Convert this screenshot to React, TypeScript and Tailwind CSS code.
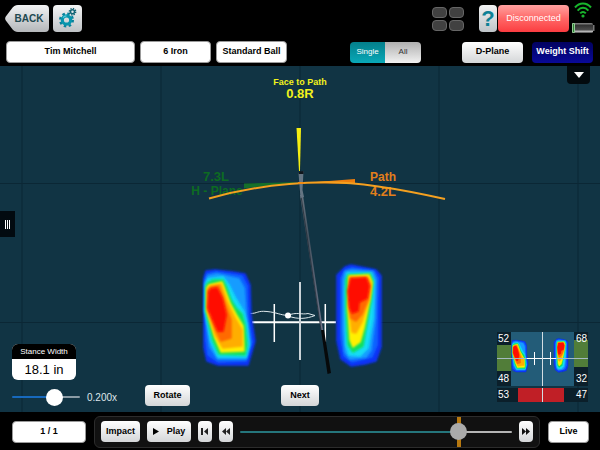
import { useState } from 'react';
import type { ButtonHTMLAttributes } from 'react';
import clsx from 'clsx';

type ButtonProps = ButtonHTMLAttributes<HTMLButtonElement>;

// Light glossy button used all over the app
function SilverButton({ className, ...props }: ButtonProps) {
  return (
    <button
      type="button"
      className={clsx(
        'flex h-[21px] shrink-0 items-center justify-center rounded bg-gradient-to-b from-white to-[#d4d6d8] text-[9px] font-bold text-black',
        className
      )}
      {...props}
    />
  );
}

// White field with a grey rim (player, club, ball, counter)
function FieldButton({ className, ...props }: ButtonProps) {
  return (
    <button
      type="button"
      className={clsx(
        'flex h-[22px] shrink-0 items-center justify-center rounded border border-[#9a9a9a] bg-white text-[9px] font-bold text-black',
        className
      )}
      {...props}
    />
  );
}

function GearsIcon() {
  return (
    <svg viewBox="0 0 29 27" className="h-[27px] w-[29px]" fill="none" aria-hidden="true">
      <circle cx="13.5" cy="15" r="6.3" stroke="#08809a" strokeWidth="2.4" strokeDasharray="2.5 2.45" />
      <circle cx="13.5" cy="15" r="4.2" stroke="#0795ad" strokeWidth="3.2" />
      <path d="M10 12.6a4.3 4.3 0 0 1 3.5-1.8" stroke="#56cbdb" strokeWidth="1.2" />
      <circle cx="19.5" cy="6.7" r="3.2" stroke="#126475" strokeWidth="1.4" strokeDasharray="1.3 1.21" />
      <circle cx="19.5" cy="6.7" r="2" stroke="#126475" strokeWidth="1.5" />
    </svg>
  );
}

function WifiIcon() {
  return (
    <svg viewBox="0 0 18 16" className="h-4 w-[18px]" fill="none" stroke="#18b52c" strokeWidth="2" aria-hidden="true">
      <path d="M1 5.5C5.5 0 12.5 0 17 5.5" />
      <path d="M3.6 8.6C6.8 4.8 11.2 4.8 14.4 8.6" />
      <path d="M6.2 11.4C7.9 9.4 10.1 9.4 11.8 11.4" />
      <circle cx="9" cy="14" r="1.6" fill="#18b52c" stroke="none" />
    </svg>
  );
}

function BatteryIcon() {
  return (
    <svg viewBox="0 0 24 12" className="h-3 w-6" aria-hidden="true">
      <defs>
        <linearGradient id="battery" x1="0" y1="0" x2="0" y2="1">
          <stop offset="0" stopColor="#8a8a8a" />
          <stop offset="0.25" stopColor="#333" />
          <stop offset="0.65" stopColor="#4a4a4a" />
          <stop offset="0.85" stopColor="#b5b5b5" />
          <stop offset="1" stopColor="#444" />
        </linearGradient>
      </defs>
      <rect x="1" y="1" width="21" height="10" rx="1.5" fill="url(#battery)" />
      <rect x="22" y="3" width="1.5" height="6" fill="#777" />
      <rect x="1" y="1" width="3" height="10" rx="1" fill="#8fca92" />
      <rect x="2" y="2" width="1" height="8" fill="#2e7d32" />
    </svg>
  );
}

// Pressure maps of the feet, coldest layer first
const leftFoot = [
  { color: '#0a32f5', d: 'M206 271 215 270 233 272 245 274 250 285 251 315 255 341 248 365 218 365 207 361 204 348 204 278Z' },
  { color: '#0f62ff', d: 'M207 274 216 272 242 276 247 286 248 315 252 342 246 361 218 362 208 355 206 340 205 280Z' },
  { color: '#169cff', d: 'M208 276 217 274 239 279 244 288 246 315 250 343 246 359 218 359 210 347 205 310 205 284Z' },
  { color: '#12dcf5', d: 'M208 279 223 277 229 285 236 299 244 312 247 325 249 345 246 357 218 357 211 342 205 310 206 284Z' },
  { color: '#10e060', d: 'M208 283 213 280 223 280 226 286 231 300 236 308 242 314 245 325 247 345 245 355 219 354 213 341 206 311 206 286Z' },
  { color: '#fff000', d: 'M209 285 222 282 225 290 230 303 237 316 243 326 244 351 221 352 215 338 207 311 207 288Z' },
  { color: '#ffae00', d: 'M210 286 221 284 227 301 235 318 242 330 242 346 223 348 215 335 208 311 208 289Z' },
  { color: '#ff6a00', d: 'M211 287 219 286 225 303 231 320 231 338 221 341 216 331 208 310 208 290Z' },
  { color: '#ff0800', d: 'M211 289 217 288 222 298 226 315 223 331 218 331 214 322 208 308 209 292Z' },
];

const rightFoot = [
  { color: '#0a32f5', d: 'M345 267 351 265 376 270 381 276 381 347 376 361 365 364 351 366 341 359 337 341 337 275Z' },
  { color: '#0f62ff', d: 'M345 270 352 268 374 271 378 278 377 345 372 357 352 362 344 356 341 338 341 278Z' },
  { color: '#169cff', d: 'M345 272 352 270 373 272 376 280 375 320 371 350 366 357 350 359 345 352 343 330 343 280Z' },
  { color: '#12dcf5', d: 'M347 273 371 273 374 281 373 318 368 348 360 356 349 355 346 345 345 291Z' },
  { color: '#10e060', d: 'M348 275 370 274 373 281 371 301 366 328 363 346 353 352 348 345 346 308 346 280Z' },
  { color: '#fff000', d: 'M349 276 369 275 372 282 370 298 364 328 360 342 353 347 350 340 348 308Z' },
  { color: '#ffae00', d: 'M350 277 368 277 371 284 369 299 362 322 356 333 352 332 349 308Z' },
  { color: '#ff6a00', d: 'M350 278 367 278 370 286 368 300 362 314 356 321 351 318 349 305Z' },
  { color: '#ff0800', d: 'M351 279 366 278 369 286 367 298 359 302 358 311 352 313 350 308 348 291Z' },
];

function Feet() {
  return (
    <g strokeLinejoin="round" strokeWidth="1.5">
      {[...leftFoot, ...rightFoot].map((layer) => (
        <path key={layer.d} d={layer.d} fill={layer.color} stroke={layer.color} filter="url(#soft)" />
      ))}
    </g>
  );
}

function SwingScene() {
  return (
    <svg
      viewBox="0 66 600 346"
      preserveAspectRatio="xMidYMid slice"
      className="absolute inset-0 size-full"
      role="img"
      aria-label="Swing path and foot pressure"
    >
      <defs>
        <filter id="soft" x="-20%" y="-20%" width="140%" height="140%">
          <feGaussianBlur stdDeviation="1.2" />
        </filter>
        <linearGradient id="shaft" x1="0" y1="0" x2="0" y2="1">
          <stop offset="0" stopColor="#65717c" />
          <stop offset="0.3" stopColor="#45525f" />
          <stop offset="1" stopColor="#6f7489" />
        </linearGradient>
      </defs>

      {/* floor grid */}
      <path d="M22 66V412M161 66V412M300 66V412M439 66V412M578 66V412M0 183.5H600M0 322.5H600" stroke="#0b2735" strokeWidth="1" />

      <g fontFamily="Liberation Sans, Arial, sans-serif" fontWeight="700" textAnchor="middle">
        <text x="300" y="85" fontSize="9" fill="#f2f21c">Face to Path</text>
        <text x="300" y="98" fontSize="13" fill="#f2f21c">0.8R</text>
        <text x="216" y="181" fontSize="13" fill="#0d6b22">7.3L</text>
        <text x="217" y="195" fontSize="12" fill="#0d6b22">H - Plane</text>
        <text x="383" y="181" fontSize="12" fill="#e27f1b">Path</text>
        <text x="383" y="196" fontSize="13" fill="#e27f1b">4.2L</text>
      </g>

      {/* direction wedges */}
      <path d="M296.5 128H301L300 171H299Z" fill="#f5ee12" />
      <path d="M244 183.5 300 182 244 188.5Z" fill="#15702a" />
      <path d="M303 183 355 179V184Z" fill="#ef7d0c" />

      <path d="M209 198.5C250 187 290 182.5 325 182.2S405 190 445 199" fill="none" stroke="#f4a020" strokeWidth="2" />

      {/* stance cross */}
      <g stroke="#fff">
        <path d="M252 322.3H336" strokeWidth="2" />
        <path d="M274.3 304V342M325.3 304V342" strokeWidth="1.5" />
        <path d="M300 282V360" strokeWidth="2" stroke="#c9d1d6" />
      </g>
      <path d="M250 313.5C258 313.5 257 310.5 267 311.5S280 315 288 315.500C296 311.5 302 315 308 313.5L315 315.5C306 319 298 319.5 288 316" fill="none" stroke="#dfe8ec" strokeWidth="1" />
      <circle cx="288" cy="315.5" r="3" fill="#fff" />

      <Feet />

      {/* club */}
      <path d="M300 195 303 195 323 330 321 331Z" fill="url(#shaft)" />
      <path d="M301 196 321 330" stroke="#1c2731" strokeWidth="0.7" />
      <path d="M321 330 324 330 331 373 327.5 374Z" fill="#07090a" />
      <path d="M298.5 173 303.5 171 302.5 190 304 197 300.5 198Z" fill="#657583" />
      <path d="M298.5 174 299.5 171.5 303.5 171V174Z" fill="#10161c" />
      <path d="M298 183H304" stroke="#f08b14" strokeWidth="2" />
    </svg>
  );
}

function WeightMap() {
  return (
    <svg viewBox="497 332 91 70" className="h-[70px] w-[91px]" role="img" aria-label="Weight distribution">
      <rect x="497" y="332" width="14" height="54" fill="#0b1f2a" />
      <rect x="574" y="332" width="14" height="54" fill="#0b1f2a" />
      <rect x="497" y="345" width="14" height="26" fill="#517d39" />
      <rect x="574" y="340" width="14" height="27" fill="#517d39" />
      <rect x="511" y="332" width="63" height="54" fill="#235c78" />
      <rect x="497" y="388" width="91" height="14" fill="#0b1f2a" />
      <rect x="518" y="388" width="46" height="14" fill="#c01f26" />
      <g transform="translate(447.5 250) scale(0.316 0.334)">
        <Feet />
      </g>
      <path d="M497 358.5H588" stroke="#a5bac2" strokeWidth="1" />
      <path d="M527 358.5H556M534.5 352V365M550.5 352V365" stroke="#fff" strokeWidth="1" />
      <path d="M542.5 332V386M542.5 388V402" stroke="#d3dde2" strokeWidth="1" />
      <g fontFamily="Liberation Sans, Arial, sans-serif" fontSize="10" fill="#fff">
        <text x="498" y="342">52</text>
        <text x="498" y="382">48</text>
        <text x="498" y="398">53</text>
        <text x="587" y="342" textAnchor="end">68</text>
        <text x="587" y="382" textAnchor="end">32</text>
        <text x="587" y="398" textAnchor="end">47</text>
      </g>
    </svg>
  );
}

function Header() {
  const [view, setView] = useState('single');

  return (
    <header className="flex flex-col gap-2 pt-1 pb-[3px]">
      <div className="flex h-[29px] items-center pr-[5px] pl-[5px]">
        <button type="button" className="relative h-[27px] w-11 text-[10px] font-bold text-[#20484f]">
          <svg viewBox="0 0 44 27" className="absolute inset-0 size-full" aria-hidden="true">
            <defs>
              <linearGradient id="back" x1="0" y1="0" x2="0" y2="1">
                <stop offset="0" stopColor="#f1f2f3" />
                <stop offset="1" stopColor="#b4b7ba" />
              </linearGradient>
            </defs>
            <path d="M13 0H40Q44 0 44 4V23Q44 27 40 27H13Q9 27 6.5 23L0.8 15.5Q-0.5 13.5 0.8 11.5L6.5 4Q9 0 13 0Z" fill="url(#back)" />
          </svg>
          <span className="relative pl-1">BACK</span>
        </button>
        <button type="button" aria-label="Settings" className="ml-1 h-[27px] w-[29px] rounded bg-gradient-to-b from-[#f4f5f6] to-[#bfc2c5]">
          <GearsIcon />
        </button>

        <button type="button" aria-label="Layout" className="mr-[15px] ml-auto grid grid-cols-2 gap-[2px]">
          <span className="h-[11px] w-[15px] rounded-sm border border-[#666] bg-[#414141]" />
          <span className="h-[11px] w-[15px] rounded-sm border border-[#666] bg-[#414141]" />
          <span className="h-[11px] w-[15px] rounded-sm border border-[#666] bg-[#414141]" />
          <span className="h-[11px] w-[15px] rounded-sm border border-[#666] bg-[#414141]" />
        </button>
        <button
          type="button"
          aria-label="Help"
          className="mr-px h-[27px] w-[18px] rounded bg-gradient-to-b from-[#f1f2f3] to-[#bfc4c8] text-[22px] leading-[27px] font-bold text-[#0d8196]"
        >
          ?
        </button>
        <button type="button" className="h-[27px] w-[71px] rounded bg-gradient-to-b from-[#ffa0a0] via-[#ff6666] to-[#fb3b40] text-[9px] text-white">
          Disconnected
        </button>
        <div className="ml-[2px] flex flex-col items-center gap-1 pb-[2px]">
          <WifiIcon />
          <BatteryIcon />
        </div>
      </div>

      <div className="flex h-[22px] items-center pr-[7px] pl-[6px]">
        <div className="flex gap-[5px]">
          <FieldButton className="w-[129px]">Tim Mitchell</FieldButton>
          <FieldButton className="w-[71px]">6 Iron</FieldButton>
          <FieldButton className="w-[71px]">Standard Ball</FieldButton>
        </div>
        <div className="mr-[41px] ml-auto flex h-[21px] overflow-hidden rounded text-[8px]">
          <button
            type="button"
            aria-pressed={view === 'single'}
            onClick={() => setView('single')}
            className={clsx(
              'w-[35px]',
              view === 'single' ? 'bg-gradient-to-b from-[#047f8b] to-[#09a9b8] text-white' : 'bg-gradient-to-b from-[#b0b0b0] to-[#f2f2f2] text-[#333]'
            )}
          >
            Single
          </button>
          <button
            type="button"
            aria-pressed={view === 'all'}
            onClick={() => setView('all')}
            className={clsx(
              'w-9',
              view === 'all' ? 'bg-gradient-to-b from-[#047f8b] to-[#09a9b8] text-white' : 'bg-gradient-to-b from-[#b0b0b0] to-[#f2f2f2] text-[#333]'
            )}
          >
            All
          </button>
        </div>
        <div className="flex gap-[9px]">
          <SilverButton className="w-[61px]">D-Plane</SilverButton>
          <button type="button" className="h-[21px] w-[61px] rounded bg-gradient-to-b from-[#020260] to-[#0a0a98] text-[9px] font-bold whitespace-nowrap text-white">
            Weight Shift
          </button>
        </div>
      </div>
    </header>
  );
}

function SpeedControl() {
  const [speed, setSpeed] = useState(66);

  return (
    <div className="flex flex-col gap-2">
      <div className="w-16 overflow-hidden rounded-md bg-white text-center">
        <div className="bg-black text-[8px] leading-[15px] text-white">Stance Width</div>
        <div className="text-[13px] leading-[21px] text-black">18.1 in</div>
      </div>
      <div className="flex h-[18px] items-center gap-[7px]">
        <input
          type="range"
          aria-label="Playback speed"
          value={speed}
          onChange={(e) => setSpeed(Number(e.target.value))}
          style={{ backgroundImage: `linear-gradient(to right, #1769bd ${speed}%, #8b9ba5 ${speed}%)` }}
          className="h-[2px] w-[68px] appearance-none rounded [&::-webkit-slider-thumb]:size-[17px] [&::-webkit-slider-thumb]:appearance-none [&::-webkit-slider-thumb]:rounded-full [&::-webkit-slider-thumb]:bg-white"
        />
        <span className="text-[10px] text-[#dfe6ea]">0.200x</span>
      </div>
    </div>
  );
}

function PlaybackBar() {
  const [position, setPosition] = useState(82.5);

  return (
    <footer className="flex h-[38px] items-center gap-2 pr-[11px] pt-px pl-3">
      <FieldButton className="w-[74px]">1 / 1</FieldButton>
      <div className="flex h-8 min-w-0 flex-1 items-center gap-[7px] rounded-md border border-[#2c2c2c] bg-[#111] px-[6px]">
        <SilverButton className="w-[39px]">Impact</SilverButton>
        <SilverButton className="w-11 gap-2">
          <svg viewBox="0 0 6 7" className="h-[7px] w-[6px]" aria-hidden="true">
            <path d="M0 0 6 3.5 0 7Z" />
          </svg>
          Play
        </SilverButton>
        <SilverButton className="w-[14px]" aria-label="To start">
          <svg viewBox="0 0 8 7" className="h-[7px] w-2" fill="#222" aria-hidden="true">
            <path d="M0 0H2V7H0ZM7 0V7L3 3.5Z" />
          </svg>
        </SilverButton>
        <SilverButton className="w-[14px]" aria-label="Rewind">
          <svg viewBox="0 0 8 7" className="h-[7px] w-2" fill="#222" aria-hidden="true">
            <path d="M4 0V7L0 3.5ZM8 0V7L4 3.5Z" />
          </svg>
        </SilverButton>
        <div className="relative flex h-full min-w-0 flex-1 items-center">
          <div className="absolute inset-x-[8px] inset-y-0">
            <span className="absolute inset-y-0 w-1 -translate-x-1/2 bg-[#b67810]" style={{ left: `${position}%` }} />
          </div>
          <input
            type="range"
            aria-label="Swing position"
            step="0.5"
            value={position}
            onChange={(e) => setPosition(Number(e.target.value))}
            style={{ backgroundImage: `linear-gradient(to right, #25767c ${position}%, #b5b5b5 ${position}%)` }}
            className="relative h-[2px] w-full appearance-none rounded [&::-webkit-slider-thumb]:size-[17px] [&::-webkit-slider-thumb]:appearance-none [&::-webkit-slider-thumb]:rounded-full [&::-webkit-slider-thumb]:bg-[#aaa]"
          />
        </div>
        <SilverButton className="w-[14px]" aria-label="Fast forward">
          <svg viewBox="0 0 8 7" className="h-[7px] w-2" fill="#111" aria-hidden="true">
            <path d="M0 0V7L4 3.5ZM4 0V7L8 3.5Z" />
          </svg>
        </SilverButton>
      </div>
      <FieldButton className="w-[41px]">Live</FieldButton>
    </footer>
  );
}

export default function App() {
  return (
    <div className="flex min-h-screen flex-col bg-black font-['Liberation_Sans',Arial,sans-serif]">
      <Header />

      <main className="relative flex flex-1 flex-col justify-between overflow-hidden bg-[#113444]">
        <SwingScene />

        <button
          type="button"
          aria-label="Show options"
          className="relative mr-[10px] flex h-[18px] w-[23px] items-center justify-center self-end rounded-b bg-[#030a0e]"
        >
          <svg viewBox="0 0 10 6" className="h-[6px] w-[10px]" fill="#fff" aria-hidden="true">
            <path d="M0 0H10L5 6Z" />
          </svg>
        </button>

        {/* side panel handle */}
        <button
          type="button"
          aria-label="Open side panel"
          className="absolute top-[42%] left-0 flex h-[26px] w-[15px] items-center justify-center gap-px bg-[#020a10]"
        >
          <span className="h-[9px] w-px bg-white" />
          <span className="h-[9px] w-px bg-white" />
          <span className="h-[9px] w-px bg-white" />
        </button>

        <div className="relative grid grid-cols-[1fr_auto_1fr] items-end px-3 pb-[6px]">
          <div className="flex items-end gap-7">
            <SpeedControl />
            <SilverButton className="w-[45px]">Rotate</SilverButton>
          </div>
          <SilverButton className="w-[38px]">Next</SilverButton>
          <div className="justify-self-end pb-1">
            <WeightMap />
          </div>
        </div>
      </main>

      <PlaybackBar />
    </div>
  );
}
